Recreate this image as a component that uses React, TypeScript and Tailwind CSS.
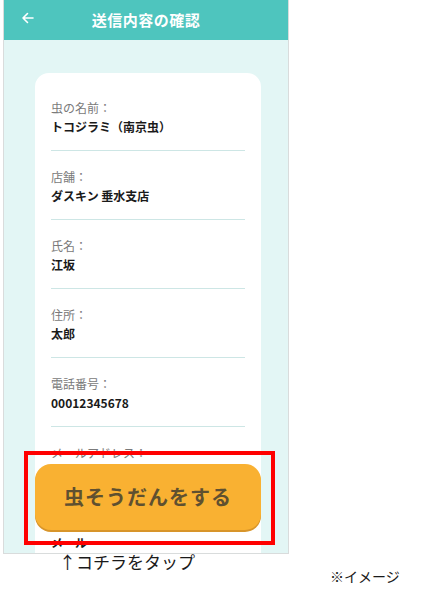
import React from "react";

interface Field {
  label: string;
  value: string;
  lines?: number;
}

const fields: Field[] = [
  { label: "虫の名前：", value: "トコジラミ（南京虫）" },
  { label: "店舗：", value: "ダスキン 垂水支店" },
  { label: "氏名：", value: "江坂" },
  { label: "住所：", value: "太郎" },
  { label: "電話番号：", value: "00012345678" },
  // value sits behind the fixed button, only its space is kept
  { label: "メールアドレス：", value: "", lines: 2 },
];

const App: React.FC = () => {
  return (
    <div
      className="relative w-[424px] h-[605px] bg-white overflow-hidden"
      style={{ fontFamily: '"Noto Sans CJK JP", "Noto Sans", sans-serif' }}
    >
      {/* Phone screen */}
      <div className="relative ml-[3px] w-[286px] h-[554px] border-x border-b border-[#d9dcdc] overflow-hidden bg-[#e3f6f5]">
        {/* Header */}
        <div className="relative flex items-center justify-center h-[40px] bg-[#4ec5be]">
          <svg
            className="absolute left-[16px] top-[10px]"
            width="16"
            height="16"
            viewBox="0 0 16 16"
            fill="none"
            stroke="white"
            strokeWidth="1.6"
            strokeLinecap="round"
            strokeLinejoin="round"
          >
            <path d="M13 8H3M7.5 3.5L3 8l4.5 4.5" />
          </svg>
          <span className="text-white text-[15px] font-bold leading-none -mt-[2px] tracking-[0.5px]">
            送信内容の確認
          </span>
        </div>

        {/* Card */}
        <div className="mt-[33px] ml-[31px] w-[226px] bg-white rounded-[14px] pt-[9px] px-[16px] pb-[40px]">
          {fields.map((f, i) => (
            <div key={i} className="pt-[17px] pb-[14px] border-b border-[#cde6e5]">
              <div className="text-[12px] leading-[18px] text-[#7a7a7a]">{f.label}</div>
              {f.lines === 2 ? (
                <div className="mt-[1px] h-[36px]" />
              ) : (
                <div className="mt-[1px] text-[12px] leading-[18px] font-bold text-[#1a1a1a]">
                  {f.value}
                </div>
              )}
            </div>
          ))}
          <div className="pt-[20px] text-[12px] leading-[18px] font-bold text-[#1a1a1a]">メール</div>
        </div>

        {/* Fixed bottom button */}
        <button className="absolute left-[31px] top-[464px] w-[226px] h-[66px] rounded-[16px] bg-[#f9b132] shadow-[0_2px_0_#d8952a] flex items-center justify-center">
          <span className="text-[20px] font-bold text-[#5f5030] tracking-[1px] leading-none">
            虫そうだんをする
          </span>
        </button>
      </div>

      {/* Annotation box */}
      <div className="absolute left-[24px] top-[451px] w-[251px] h-[94px] border-[4px] border-[#ff0000]" />

      {/* Captions */}
      <div className="absolute left-[59px] top-[550px] text-[17px] leading-[24px] text-[#1a1a1a]">
        ↑コチラをタップ
      </div>
      <div className="absolute left-[330px] top-[566px] text-[14px] leading-[20px] text-[#1a1a1a]">
        ※イメージ
      </div>
    </div>
  );
};

export default App;
